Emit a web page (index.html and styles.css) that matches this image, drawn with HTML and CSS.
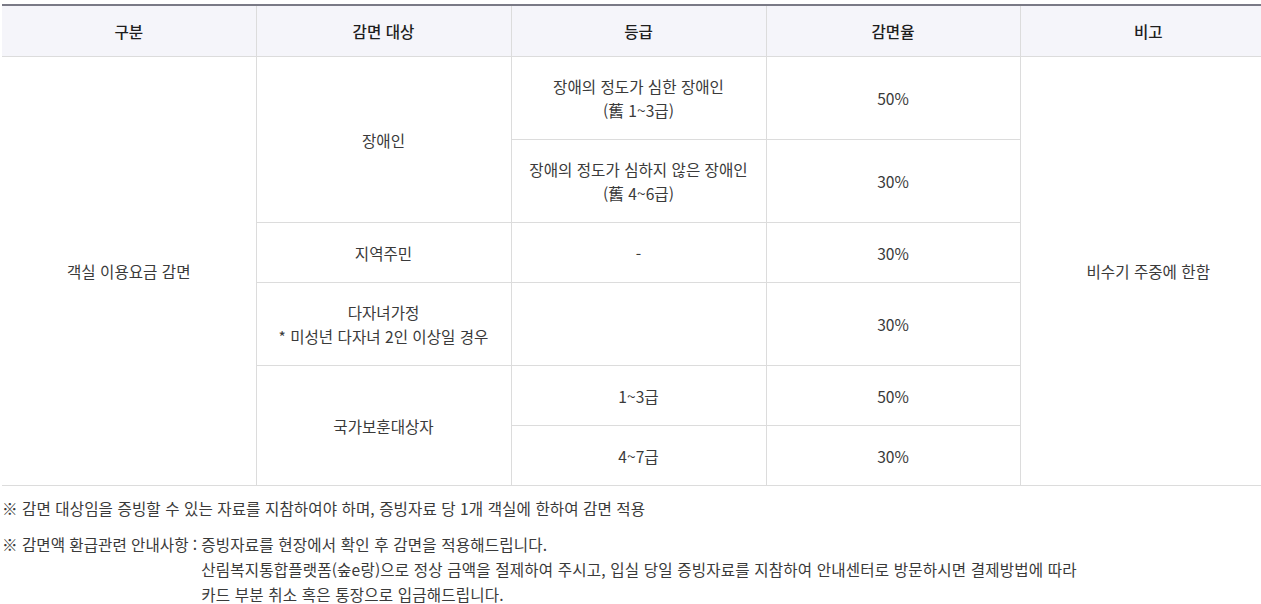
FILE: index.html
```html
<!DOCTYPE html>
<html lang="ko">
<head>
<meta charset="utf-8">
<title>감면 안내</title>
<link rel="stylesheet" href="styles.css">
</head>
<body>
<div class="wrap">
  <table class="tbl">
    <colgroup>
      <col class="c1"><col class="c2"><col class="c3"><col class="c4"><col class="c5">
    </colgroup>
    <thead>
      <tr>
        <th>구분</th>
        <th>감면 대상</th>
        <th>등급</th>
        <th>감면율</th>
        <th>비고</th>
      </tr>
    </thead>
    <tbody>
      <tr class="tall">
        <td rowspan="7">객실 이용요금 감면</td>
        <td rowspan="2">장애인</td>
        <td>장애의 정도가 심한 장애인<br>(舊 1~3급)</td>
        <td>50%</td>
        <td rowspan="7">비수기 주중에 한함</td>
      </tr>
      <tr class="tall">
        <td>장애의 정도가 심하지 않은 장애인<br>(舊 4~6급)</td>
        <td>30%</td>
      </tr>
      <tr class="short">
        <td>지역주민</td>
        <td>-</td>
        <td>30%</td>
      </tr>
      <tr class="tall">
        <td>다자녀가정<br>* 미성년 다자녀 2인 이상일 경우</td>
        <td></td>
        <td>30%</td>
      </tr>
      <tr class="short">
        <td rowspan="2">국가보훈대상자</td>
        <td>1~3급</td>
        <td>50%</td>
      </tr>
      <tr class="short">
        <td>4~7급</td>
        <td>30%</td>
      </tr>
    </tbody>
  </table>

  <div class="notes">
    <p class="note">※ 감면 대상임을 증빙할 수 있는 자료를 지참하여야 하며, 증빙자료 당 1개 객실에 한하여 감면 적용</p>
    <div class="note note-grid">
      <span class="label">※ 감면액 환급관련 안내사항 :</span>
      <div class="body">
        <p>증빙자료를 현장에서 확인 후 감면을 적용해드립니다.</p>
        <p>산림복지통합플랫폼(숲e랑)으로 정상 금액을 절제하여 주시고, 입실 당일 증빙자료를 지참하여 안내센터로 방문하시면 결제방법에 따라</p>
        <p>카드 부분 취소 혹은 통장으로 입금해드립니다.</p>
      </div>
    </div>
  </div>
</div>
</body>
</html>
```

FILE: styles.css
```css
html, body {
  margin: 0;
  padding: 0;
  overflow: hidden;
  background: #fff;
}
body {
  font-family: "Noto Sans CJK KR", "Noto Sans", sans-serif;
  font-size: 15.6px;
  color: #3a3a3a;
}
.wrap {
  width: 1274px;
  padding: 4px 0 0 2px;
}
.tbl {
  width: 1274px;
  border-collapse: collapse;
  table-layout: fixed;
  border-top: 2px solid #7a7a86;
  border-bottom: 1px solid #dcdcdc;
}
.c1 { width: 254px; }
.c2 { width: 255px; }
.c3 { width: 255px; }
.c4 { width: 254px; }
.c5 { width: 256px; }
.tbl th {
  height: 50px;
  padding: 0;
  background: #f5f5fa;
  font-weight: 500;
  color: #1e1e1e;
  border-bottom: 1px solid #dcdcdc;
  border-left: 1px solid #dcdcdc;
  text-align: center;
  line-height: 24px;
}
.tbl th:first-child { border-left: 0; }
.tbl td {
  padding: 0;
  text-align: center;
  vertical-align: middle;
  line-height: 24px;
  border: 1px solid #dcdcdc;
}
.tbl td:first-child[rowspan="7"] { border-left: 0; }
.tbl td[rowspan="7"]:last-child { border-right: 0; }
.tall td { height: 82px; }
.short td { height: 59px; }
.notes {
  padding-top: 10px;
  line-height: 25px;
}
.note {
  margin: 0 0 11px;
  letter-spacing: 0.07px;
}
.note-grid {
  display: flex;
  letter-spacing: 0;
}
.note-grid .label {
  white-space: pre;
  margin-right: 4px;
}
.note-grid .body {
  letter-spacing: 0.15px;
}
.note-grid .body p {
  margin: 0;
}
```
